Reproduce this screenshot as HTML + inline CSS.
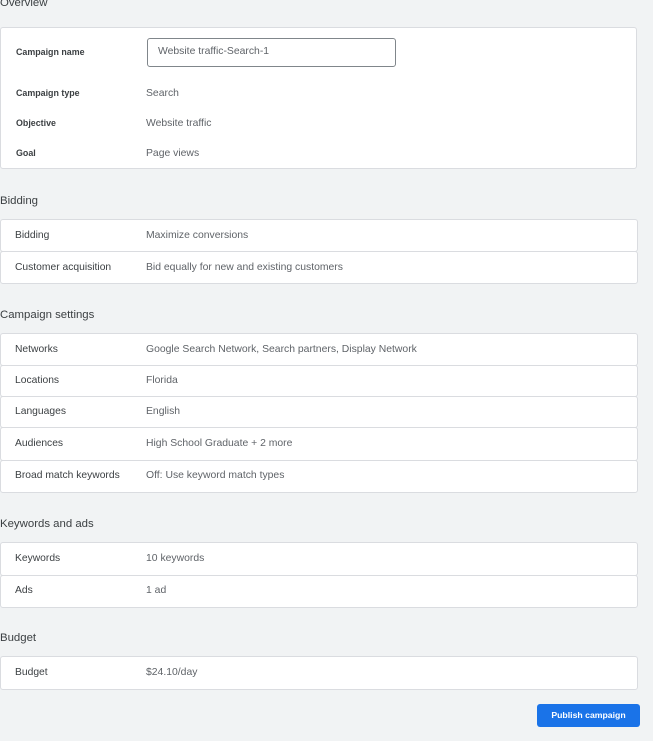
<!DOCTYPE html>
<html><head><style>
body{margin:0;width:653px;height:741px;background:#f1f3f4;font-family:"Liberation Sans",sans-serif;position:relative;overflow:hidden}
.h{position:absolute;left:0;font-size:11.4px;color:#3c4043}
.box{position:absolute;left:0;width:636px;background:#fff;border:1px solid #dadce0;border-radius:3px;box-sizing:border-box}
.l{position:absolute;left:15px;font-size:10.3px;color:#3c4043}
.v{position:absolute;left:146px;font-size:10.4px;color:#5f6368}
.b{font-weight:bold;font-size:8.9px;left:16px}
</style></head><body>
<div class="h" style="top:-3px">Overview</div>
<div class="box" style="top:27px;height:142px;width:637px"></div>
<div class="l b" style="top:47px">Campaign name</div>
<div style="position:absolute;left:147px;top:38px;width:249px;height:29px;border:1px solid #80868b;border-radius:3px;box-sizing:border-box;background:#fff"></div>
<div class="v" style="left:158px;top:46px">Website traffic-Search-1</div>
<div class="l b" style="top:88px">Campaign type</div><div class="v" style="top:88px">Search</div>
<div class="l b" style="top:118px">Objective</div><div class="v" style="top:118px">Website traffic</div>
<div class="l b" style="top:148px">Goal</div><div class="v" style="top:148px">Page views</div>

<div class="h" style="top:195px">Bidding</div>
<div class="box" style="top:219px;height:33px;width:638px"></div>
<div class="box" style="top:251px;height:33px;width:638px"></div>
<div class="l" style="top:230px">Bidding</div><div class="v" style="top:230px">Maximize conversions</div>
<div class="l" style="top:262px">Customer acquisition</div><div class="v" style="top:262px">Bid equally for new and existing customers</div>

<div class="h" style="top:309px">Campaign settings</div>
<div class="box" style="top:333px;height:33px;width:638px"></div>
<div class="box" style="top:365px;height:32px;width:638px"></div>
<div class="box" style="top:396px;height:32px;width:638px"></div>
<div class="box" style="top:427px;height:34px;width:638px"></div>
<div class="box" style="top:460px;height:33px;width:638px"></div>
<div class="l" style="top:344px">Networks</div><div class="v" style="top:344px">Google Search Network, Search partners, Display Network</div>
<div class="l" style="top:375px">Locations</div><div class="v" style="top:375px">Florida</div>
<div class="l" style="top:406px">Languages</div><div class="v" style="top:406px">English</div>
<div class="l" style="top:438px">Audiences</div><div class="v" style="top:438px">High School Graduate + 2 more</div>
<div class="l" style="top:470px">Broad match keywords</div><div class="v" style="top:470px">Off: Use keyword match types</div>

<div class="h" style="top:518px">Keywords and ads</div>
<div class="box" style="top:542px;height:34px;width:638px"></div>
<div class="box" style="top:575px;height:33px;width:638px"></div>
<div class="l" style="top:553px">Keywords</div><div class="v" style="top:553px">10 keywords</div>
<div class="l" style="top:585px">Ads</div><div class="v" style="top:585px">1 ad</div>

<div class="h" style="top:632px">Budget</div>
<div class="box" style="top:656px;height:34px;width:638px"></div>
<div class="l" style="top:667px">Budget</div><div class="v" style="top:667px">$24.10/day</div>

<div style="position:absolute;left:537px;top:704px;width:103px;height:23px;background:#1a73e8;border-radius:3px;color:#fff;font-size:8.7px;font-weight:bold;text-align:center;line-height:22px">Publish campaign</div>
</body></html>
